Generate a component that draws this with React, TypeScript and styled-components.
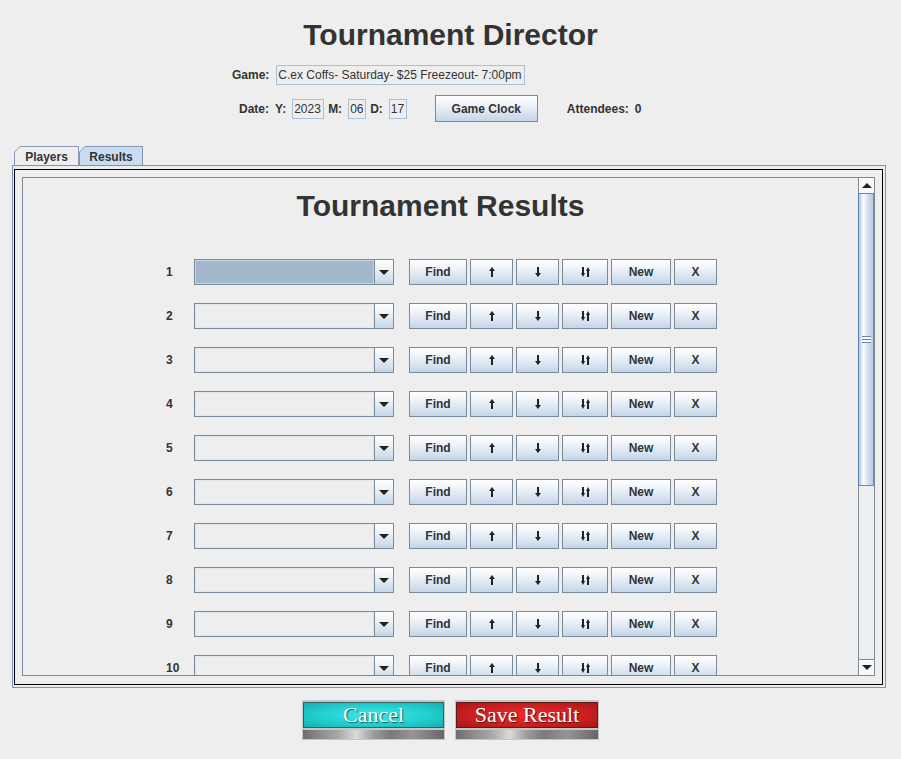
import React from 'react';
import styled, { createGlobalStyle } from 'styled-components';

const LINE = '#7a8a99';
const BTN_BG = 'linear-gradient(to bottom, #ffffff 0%, #f1f5fa 30%, #dbe6f2 65%, #c3d5e8 100%)';

const GlobalStyle = createGlobalStyle`
  html, body { margin: 0; padding: 0; background: #eeeeee; }
  body { font-family: "Liberation Sans", Arial, sans-serif; color: #333333; }
  * { box-sizing: border-box; }
`;

const Page = styled.div`
  width: 901px;
  height: 759px;
  display: flex;
  flex-direction: column;
  overflow: hidden;
`;

const Title = styled.h1`
  margin: 19px 0 0;
  font-size: 30px;
  line-height: 32px;
  font-weight: bold;
  text-align: center;
  color: #333333;
`;

const FormRow = styled.div<{ $indent: number; $top: number; $height: number }>`
  display: flex;
  align-items: center;
  height: ${(p) => p.$height}px;
  margin-top: ${(p) => p.$top}px;
  padding-left: ${(p) => p.$indent}px;
`;

const Label = styled.span<{ $ml?: number }>`
  font-size: 12px;
  font-weight: bold;
  margin-left: ${(p) => p.$ml ?? 0}px;
  white-space: nowrap;
  color: #333333;
`;

const Field = styled.div<{ $w: number; $ml?: number }>`
  width: ${(p) => p.$w}px;
  height: 20px;
  margin-left: ${(p) => p.$ml ?? 0}px;
  border: 1px solid #a9c0d9;
  background: #eeeeee;
  font-size: 12px;
  line-height: 18px;
  padding: 0 1px;
  white-space: nowrap;
  overflow: hidden;
  color: #333333;
`;

const JButton = styled.button<{ $w: number; $h: number; $ml?: number }>`
  width: ${(p) => p.$w}px;
  height: ${(p) => p.$h}px;
  margin: 0 0 0 ${(p) => p.$ml ?? 0}px;
  padding: 0;
  border: 1px solid ${LINE};
  border-radius: 0;
  background: ${BTN_BG};
  font-family: "Liberation Sans", Arial, sans-serif;
  font-size: 12px;
  font-weight: bold;
  color: #333333;
  display: flex;
  align-items: center;
  justify-content: center;
  flex-shrink: 0;
`;

const TabStrip = styled.div`
  display: flex;
  margin-top: 24px;
  padding-left: 14px;
  height: 19px;
`;

const Tab = styled.div<{ $w: number }>`
  width: ${(p) => p.$w}px;
  height: 19px;
  padding: 1px 1px 0 1px;
  background: #8797b8;
  clip-path: polygon(6px 0, 100% 0, 100% 100%, 0 100%, 0 6px);
`;

const TabFace = styled.div<{ $selected: boolean }>`
  height: 100%;
  background: ${(p) => (p.$selected ? '#c8ddf2' : '#eeeeee')};
  clip-path: polygon(5px 0, 100% 0, 100% 100%, 0 100%, 0 5px);
  font-size: 12px;
  font-weight: bold;
  color: #333333;
  display: flex;
  align-items: center;
  justify-content: center;
  padding-top: 1px;
`;

const TabPane = styled.div`
  margin-left: 12px;
  width: 874px;
  height: 523px;
  border: 1px solid #7b93c2;
  padding: 3px 2px 2px 1px;
`;

const TabContent = styled.div`
  height: 100%;
  border: 1px solid #000000;
  padding: 7px 7px 8px 7px;
`;

const ScrollPane = styled.div`
  height: 100%;
  border: 1px solid ${LINE};
  display: flex;
`;

const Viewport = styled.div`
  flex: 1;
  overflow: hidden;
  padding-top: 12px;
`;

const ResultsTitle = styled.h2`
  margin: 0;
  font-size: 30px;
  line-height: 32px;
  font-weight: bold;
  text-align: center;
  color: #333333;
`;

const RowList = styled.div`
  display: flex;
  flex-direction: column;
  align-items: center;
  gap: 18px;
  margin-top: 37px;
  padding-left: 2px;
`;

const ResultRow = styled.div`
  display: flex;
  align-items: center;
  width: 551px;
  height: 26px;
  flex-shrink: 0;
`;

const RowNumber = styled.span`
  width: 28px;
  font-size: 12px;
  font-weight: bold;
  color: #333333;
  flex-shrink: 0;
`;

const Combo = styled.div`
  width: 200px;
  height: 26px;
  border: 1px solid ${LINE};
  display: flex;
  flex-shrink: 0;
`;

const ComboValue = styled.div<{ $selected: boolean }>`
  flex: 1;
  background: ${(p) => (p.$selected ? '#a3b8cc' : '#eeeeee')};
  border: 1px solid ${(p) => (p.$selected ? '#c6d4e2' : '#dfe6ee')};
`;

const ComboArrow = styled.div`
  width: 19px;
  border-left: 1px solid ${LINE};
  background: ${BTN_BG};
  display: flex;
  align-items: center;
  justify-content: center;
`;

const TriangleDown = styled.span`
  width: 0;
  height: 0;
  border-left: 5px solid transparent;
  border-right: 5px solid transparent;
  border-top: 5px solid #222222;
`;

const TriangleUp = styled.span`
  width: 0;
  height: 0;
  border-left: 5px solid transparent;
  border-right: 5px solid transparent;
  border-bottom: 5px solid #222222;
`;

const ScrollBar = styled.div`
  width: 16px;
  display: flex;
  flex-direction: column;
  background: #eeeeee;
`;

const ScrollButton = styled.div<{ $bottom?: boolean }>`
  height: 16px;
  flex-shrink: 0;
  border-left: 1px solid ${LINE};
  ${(p) => (p.$bottom ? `border-top: 1px solid ${LINE};` : `border-bottom: 1px solid ${LINE};`)}
  background: #f8f8f8;
  box-shadow: inset 1px 1px 0 #ffffff;
  display: flex;
  align-items: center;
  justify-content: center;
`;

const Track = styled.div`
  flex: 1;
  border-left: 1px solid ${LINE};
  background: #eeeeee;
`;

const Thumb = styled.div`
  height: 292px;
  margin-left: -1px;
  border: 1px solid ${LINE};
  border-left: 1px solid #6382bf;
  border-top: none;
  background: linear-gradient(to right, #a9c2e0 0%, #ffffff 30%, #dce7f3 55%, #c4d6ea 80%, #b8cfe5 100%);
  display: flex;
  align-items: center;
  justify-content: center;
`;

const Grip = styled.div`
  width: 9px;
  height: 7px;
  background: repeating-linear-gradient(to bottom, #6382bf 0px, #6382bf 1px, #ffffff 1px, #ffffff 3px);
`;

const BottomBar = styled.div`
  display: flex;
  gap: 10px;
  margin-top: 12px;
  padding-left: 302px;
`;

const ImgButton = styled.div<{ $w: number }>`
  width: ${(p) => p.$w}px;
  height: 40px;
  background: #c6c6c6;
  padding: 2px 1px 1px 1px;
  display: flex;
  flex-direction: column;
  gap: 2px;
  flex-shrink: 0;
`;

const ImgFace = styled.div<{ $tone: 'cyan' | 'red' }>`
  height: 26px;
  border: 1px solid ${(p) => (p.$tone === 'cyan' ? '#2c6464' : '#5c1c1c')};
  background: ${(p) =>
    p.$tone === 'cyan'
      ? 'radial-gradient(ellipse at center, #3ae8e8 0%, #22d0d0 55%, #17aeb0 100%)'
      : 'radial-gradient(ellipse at center, #ec2a2a 0%, #cf2020 55%, #a51818 100%)'};
  display: flex;
  align-items: center;
  justify-content: center;
  font-family: "Liberation Serif", "Times New Roman", serif;
  font-size: 22px;
  color: #ffffff;
  text-shadow: 1px 1px 1px rgba(0, 0, 0, 0.6);
`;

const ImgBar = styled.div`
  height: 9px;
  background: linear-gradient(90deg, #6c6c6c 0%, #8c8c8c 12%, #a8a8a8 25%, #dadada 38%, #9c9c9c 50%, #7a7a7a 62%, #959595 78%, #7c7c7c 90%, #666666 100%);
`;

const ArrowIcon = ({ dir }: { dir: 'up' | 'down' | 'swap' }) => {
  if (dir === 'swap') {
    return (
      <svg width="9" height="10" viewBox="0 0 9 10" aria-label="↓↑">
        <rect x="1" y="0" width="2" height="7" fill="#222" />
        <polygon points="0,6 4,6 2,10" fill="#222" />
        <rect x="6" y="3" width="2" height="7" fill="#222" />
        <polygon points="5,4 9,4 7,0" fill="#222" />
      </svg>
    );
  }
  return (
    <svg width="6" height="10" viewBox="0 0 6 10" aria-label={dir === 'up' ? '↑' : '↓'}>
      {dir === 'up' ? (
        <>
          <polygon points="0,4 6,4 3,0" fill="#222" />
          <rect x="2" y="3" width="2" height="7" fill="#222" />
        </>
      ) : (
        <>
          <rect x="2" y="0" width="2" height="7" fill="#222" />
          <polygon points="0,6 6,6 3,10" fill="#222" />
        </>
      )}
    </svg>
  );
};

const rows = Array.from({ length: 15 }, (_, i) => i + 1);

export default function App() {
  return (
    <Page>
      <GlobalStyle />
      <Title>Tournament Director</Title>
      <FormRow $indent={232} $top={14} $height={20}>
        <Label>Game:</Label>
        <Field $w={249} $ml={7}>C.ex Coffs- Saturday- $25 Freezeout- 7:00pm</Field>
      </FormRow>
      <FormRow $indent={239} $top={10} $height={27}>
        <Label>Date:</Label>
        <Label $ml={6}>Y:</Label>
        <Field $w={32} $ml={6}>2023</Field>
        <Label $ml={4}>M:</Label>
        <Field $w={18} $ml={6}>06</Field>
        <Label $ml={4}>D:</Label>
        <Field $w={18} $ml={6}>17</Field>
        <JButton $w={103} $h={27} $ml={28}>Game Clock</JButton>
        <Label $ml={29}>Attendees:</Label>
        <Label $ml={6}>0</Label>
      </FormRow>
      <TabStrip>
        <Tab $w={65}>
          <TabFace $selected={false}>Players</TabFace>
        </Tab>
        <Tab $w={64}>
          <TabFace $selected={true}>Results</TabFace>
        </Tab>
      </TabStrip>
      <TabPane>
        <TabContent>
          <ScrollPane>
            <Viewport>
              <ResultsTitle>Tournament Results</ResultsTitle>
              <RowList>
                {rows.map((n) => (
                  <ResultRow key={n}>
                    <RowNumber>{n}</RowNumber>
                    <Combo>
                      <ComboValue $selected={n === 1} />
                      <ComboArrow>
                        <TriangleDown />
                      </ComboArrow>
                    </Combo>
                    <JButton $w={58} $h={26} $ml={15}>Find</JButton>
                    <JButton $w={43} $h={26} $ml={3}><ArrowIcon dir="up" /></JButton>
                    <JButton $w={43} $h={26} $ml={3}><ArrowIcon dir="down" /></JButton>
                    <JButton $w={46} $h={26} $ml={3}><ArrowIcon dir="swap" /></JButton>
                    <JButton $w={60} $h={26} $ml={3}>New</JButton>
                    <JButton $w={43} $h={26} $ml={3}>X</JButton>
                  </ResultRow>
                ))}
              </RowList>
            </Viewport>
            <ScrollBar>
              <ScrollButton>
                <TriangleUp />
              </ScrollButton>
              <Track>
                <Thumb>
                  <Grip />
                </Thumb>
              </Track>
              <ScrollButton $bottom>
                <TriangleDown />
              </ScrollButton>
            </ScrollBar>
          </ScrollPane>
        </TabContent>
      </TabPane>
      <BottomBar>
        <ImgButton $w={143}>
          <ImgFace $tone="cyan">Cancel</ImgFace>
          <ImgBar />
        </ImgButton>
        <ImgButton $w={144}>
          <ImgFace $tone="red">Save Result</ImgFace>
          <ImgBar />
        </ImgButton>
      </BottomBar>
    </Page>
  );
}
